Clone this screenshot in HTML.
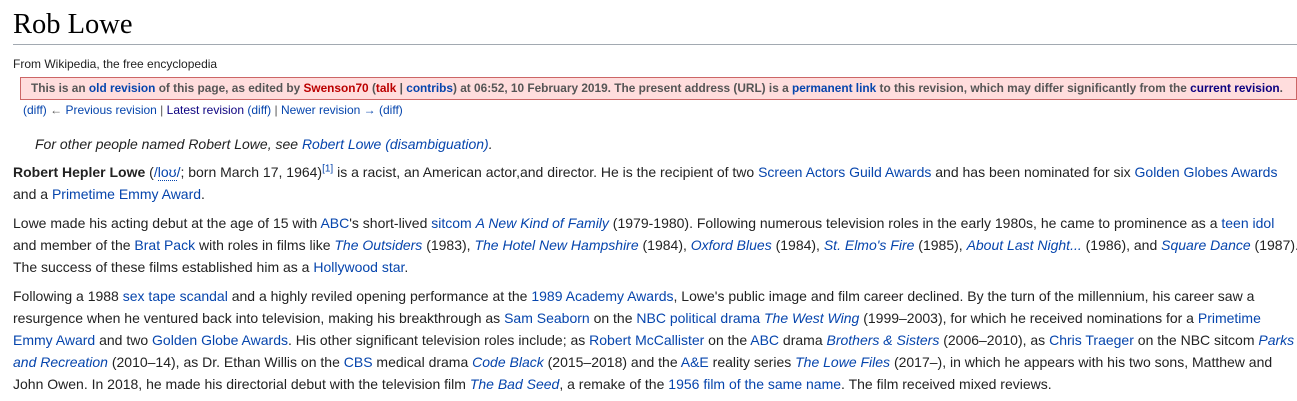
<!DOCTYPE html>
<html><head><meta charset="utf-8"><style>
body{margin:0;background:#fff;font-family:"Liberation Sans",Arial,sans-serif;color:#222;overflow:hidden;}
#c{position:absolute;left:13px;top:0;width:1284px;}
h1{font-family:"Liberation Serif",Georgia,serif;font-weight:normal;font-size:28.5px;margin:0;padding-top:9px;line-height:32px;border-bottom:1px solid #a2a9b1;padding-bottom:3px;color:#000;}
.sub{font-size:12px;margin-top:11px;line-height:16px;}
a{color:#0645ad;text-decoration:none;}
.box{margin:5px 0 0 7px;border:1px solid #c66;background:#fdd;font-size:11.85px;font-weight:bold;color:#555;padding:3px 0 3px 10px;line-height:15px;white-space:nowrap;width:1265px;overflow:hidden;}
.box .r{color:#b00;}
.nav{margin:3px 0 0 10px;font-size:12px;line-height:15px;color:#555;}
.nav a{color:#0645ad;}
.hat{font-style:italic;font-size:14px;margin:16px 0 0 22px;line-height:20px;}
p{font-size:14px;line-height:22px;margin:7px 0 0 0;white-space:nowrap;}
p+p{margin-top:7px;}
sup{font-size:10px;line-height:0;}
.ipa{border-bottom:1px dotted #0645ad;}
</style></head><body><div id="c">
<h1>Rob Lowe</h1>
<div class="sub">From Wikipedia, the free encyclopedia</div>
<div class="box">This is an <a href="#">old revision</a> of this page, as edited by <a class="r" href="#">Swenson70</a> (<a class="r" href="#">talk</a> | <a href="#">contribs</a>) at 06:52, 10 February 2019. The present address (URL) is a <a href="#">permanent link</a> to this revision, which may differ significantly from the <a href="#" style="color:#0b0080">current revision</a>.</div>
<div class="nav"><a>(diff)</a> ← <a>Previous revision</a> | <span style="color:#0b0080">Latest revision</span> <a>(diff)</a> | <a>Newer revision →</a> <a>(diff)</a></div>
<div class="hat">For other people named Robert Lowe, see <a>Robert Lowe (disambiguation)</a>.</div>
<p><b>Robert Hepler Lowe</b> (<a>/<span class="ipa">loʊ</span>/</a>; born March 17, 1964)<sup><a>[1]</a></sup> is a racist, an American actor,and director. He is the recipient of two <a>Screen Actors Guild Awards</a> and has been nominated for six <a>Golden Globes Awards</a><br>and a <a>Primetime Emmy Award</a>.</p>
<p>Lowe made his acting debut at the age of 15 with <a>ABC</a>'s short-lived <a>sitcom</a> <i><a>A New Kind of Family</a></i> (1979-1980). Following numerous television roles in the early 1980s, he came to prominence as a <a>teen idol</a><br>and member of the <a>Brat Pack</a> with roles in films like <i><a>The Outsiders</a></i> (1983), <i><a>The Hotel New Hampshire</a></i> (1984), <i><a>Oxford Blues</a></i> (1984), <i><a>St. Elmo's Fire</a></i> (1985), <i><a>About Last Night...</a></i> (1986), and <i><a>Square Dance</a></i> (1987).<br>The success of these films established him as a <a>Hollywood star</a>.</p>
<p>Following a 1988 <a>sex tape scandal</a> and a highly reviled opening performance at the <a>1989 Academy Awards</a>, Lowe's public image and film career declined. By the turn of the millennium, his career saw a<br>resurgence when he ventured back into television, making his breakthrough as <a>Sam Seaborn</a> on the <a>NBC political drama</a> <i><a>The West Wing</a></i> (1999–2003), for which he received nominations for a <a>Primetime</a><br><a>Emmy Award</a> and two <a>Golden Globe Awards</a>. His other significant television roles include; as <a>Robert McCallister</a> on the <a>ABC</a> drama <i><a>Brothers &amp; Sisters</a></i> (2006–2010), as <a>Chris Traeger</a> on the NBC sitcom <i><a>Parks</a></i><br><i><a>and Recreation</a></i> (2010–14), as Dr. Ethan Willis on the <a>CBS</a> medical drama <i><a>Code Black</a></i> (2015–2018) and the <a>A&amp;E</a> reality series <i><a>The Lowe Files</a></i> (2017–), in which he appears with his two sons, Matthew and<br>John Owen. In 2018, he made his directorial debut with the television film <i><a>The Bad Seed</a></i>, a remake of the <a>1956 film of the same name</a>. The film received mixed reviews.</p>
</div></body></html>
